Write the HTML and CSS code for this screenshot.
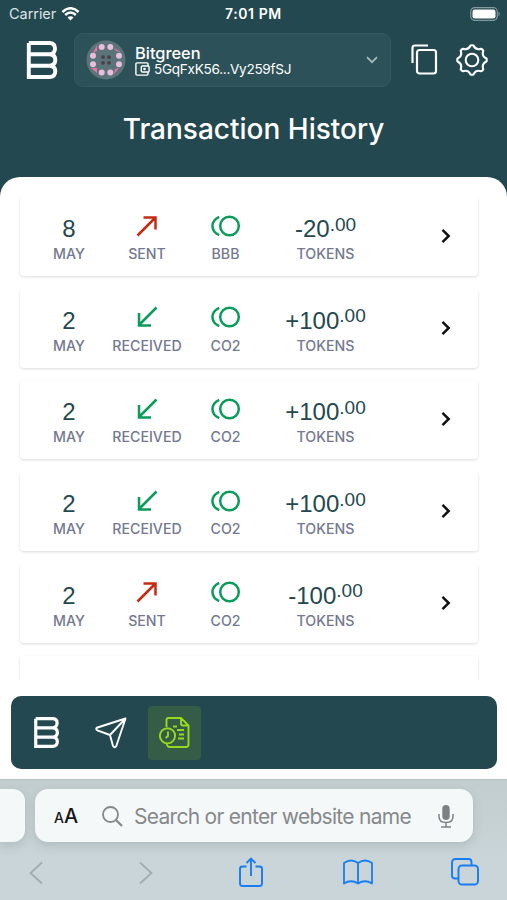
FILE: index.html
```html
<!DOCTYPE html>
<html lang="en">
<head>
<meta charset="utf-8">
<meta name="viewport" content="width=device-width">
<title>Transaction History</title>
<link rel="stylesheet" href="styles.css">
</head>
<body>
<svg class="defs" aria-hidden="true">
  <symbol id="logo" viewBox="0 0 32 38"><path d="M2.800 2H24Q29 2.500 29 7.500Q29 12.500 24 13.300H2.800M24 13.300Q29.300 14 29.300 19Q29.300 24 24 24.700H2.800M24 24.700Q29.300 25.500 29.300 30Q29.300 35.500 24 36H2.800V2" fill="none" stroke="currentColor" stroke-width="3.900"/></symbol>
  <symbol id="sent" viewBox="0 0 22 22"><path d="M1.500 20.500 19.500 2.500M7.500 2.500H19.500V14.500" fill="none" stroke="#c52a12" stroke-width="2.500"/></symbol>
  <symbol id="received" viewBox="0 0 22 22"><path d="M20.500 1.500 3 19M3 7V19.500H15" fill="none" stroke="#0b9b5b" stroke-width="2.500"/></symbol>
  <symbol id="token" viewBox="0 0 30 22"><g fill="none" stroke="#0b9b5b" stroke-width="2.500"><circle cx="18.500" cy="11" r="9.300"/><path d="M8.200 1.800C-.8 6-.8 16 8.200 20.200"/></g></symbol>
  <symbol id="chevron" viewBox="0 0 10 16"><path d="M1.500 1.800 7.700 8 1.500 14.200" fill="none" stroke="#111" stroke-width="2.500"/></symbol>
</svg>

<header class="top">
  <div class="status">
    <span class="carrier">Carrier</span>
    <svg class="wifi" viewBox="0 0 18 14" fill="none" stroke="#fff" stroke-width="2.500"><path d="M.9 5Q9-2.500 17.100 5M3.700 8Q9 3 14.300 8"/><path d="M9 13.500 6 10.500Q9 8 12 10.500Z" fill="#fff" stroke="none"/></svg>
    <span class="time">7:01 PM</span>
    <svg class="battery" viewBox="0 0 31 14"><rect x=".7" y=".7" width="26.600" height="12.600" rx="4" fill="none" stroke="#839b9f" stroke-width="1.200"/><rect x="2.500" y="2.500" width="23" height="9" rx="2.300" fill="#fff"/><path d="M28.600 4.500Q31 7 28.600 9.500Z" fill="#839b9f"/></svg>
  </div>
  <div class="account-bar">
    <svg class="brand"><use href="#logo"/></svg>
    <div class="account">
      <svg class="avatar" viewBox="0 0 40 40">
        <circle cx="20" cy="20" r="19.500" fill="#5a7479"/>
        <path d="M7 13 11 5V11ZM28 8 35 12 30 11ZM5 28 11 28 11 33ZM28 34 29 29 33 28Z" fill="#ed72a3"/>
        <g fill="#e9bddd"><circle cx="15.700" cy="7" r="3"/><circle cx="24.300" cy="7" r="3"/><circle cx="7" cy="15.700" r="3"/><circle cx="33" cy="15.700" r="3"/><circle cx="7" cy="24.300" r="3"/><circle cx="33" cy="24.300" r="3"/><circle cx="15.700" cy="32.500" r="3"/><circle cx="24.300" cy="32.500" r="3"/></g>
        <g fill="#503f4a"><circle cx="17" cy="17.200" r="1.900"/><circle cx="23" cy="17.200" r="1.900"/><circle cx="17" cy="22.800" r="1.900"/><circle cx="23" cy="22.800" r="1.900"/></g>
      </svg>
      <div class="identity">
        <div class="name">Bitgreen</div>
        <div class="address">
          <svg class="wallet" viewBox="0 0 15 14" fill="none" stroke="#fff" stroke-width="1.400"><path d="M13 4V1.800Q13 .9 12 .9H2Q.9 .9 .9 2V12Q.9 13.100 2 13.100H12Q13 13.100 13 12V10"/><rect x="6.300" y="4" width="7.800" height="6" rx="1"/><circle cx="9.500" cy="7" r=".6"/></svg>
          <span>5GqFxK56...Vy259fSJ</span>
        </div>
      </div>
      <svg class="down" viewBox="0 0 12 8"><path d="M1 1.200 6 6.200 11 1.200" fill="none" stroke="#aab9bb" stroke-width="1.700"/></svg>
    </div>
    <svg class="copy" viewBox="0 0 27 31" fill="none" stroke="#fff" stroke-width="2.200"><rect x="6" y="6" width="19" height="23.500" rx="2.500"/><path d="M1.500 19V4Q1.500 1.500 4 1.500H17"/></svg>
    <svg class="gear" viewBox="-16 -16 32 32" fill="none" stroke="#fff" stroke-width="2.100" stroke-linejoin="round"><path d="M14.500-1.500Q15 0 14.500 1.500C10.800 3.200 9.900 5.400 11.300 9.200Q10.600 10.600 9.200 11.300C5.400 9.900 3.200 10.800 1.500 14.500Q0 15 -1.500 14.500C-3.200 10.800-5.400 9.900-9.200 11.300Q-10.600 10.600-11.300 9.200C-9.900 5.400-10.800 3.200-14.500 1.500Q-15 0-14.500-1.500C-10.800-3.200-9.900-5.400-11.300-9.200Q-10.600-10.600-9.200-11.300C-5.400-9.900-3.200-10.800-1.500-14.500Q0-15 1.500-14.500C3.200-10.800 5.400-9.900 9.200-11.300Q10.600-10.600 11.300-9.200C9.900-5.400 10.800-3.200 14.500-1.500Z"/><circle r="6.300"/></svg>
  </div>
  <h1>Transaction History</h1>
</header>

<main class="sheet">
  <div class="list">
    <article class="card">
      <div class="cell"><div class="value">8</div><div class="label">MAY</div></div>
      <div class="cell"><div class="value"><svg class="arrow"><use href="#sent"/></svg></div><div class="label">SENT</div></div>
      <div class="cell"><div class="value"><svg class="token"><use href="#token"/></svg></div><div class="label">BBB</div></div>
      <div class="cell"><div class="value">-20<span class="cents">.00</span></div><div class="label">TOKENS</div></div>
      <svg class="go"><use href="#chevron"/></svg>
    </article>
    <article class="card">
      <div class="cell"><div class="value">2</div><div class="label">MAY</div></div>
      <div class="cell"><div class="value"><svg class="arrow"><use href="#received"/></svg></div><div class="label">RECEIVED</div></div>
      <div class="cell"><div class="value"><svg class="token"><use href="#token"/></svg></div><div class="label">CO2</div></div>
      <div class="cell"><div class="value">+100<span class="cents">.00</span></div><div class="label">TOKENS</div></div>
      <svg class="go"><use href="#chevron"/></svg>
    </article>
    <article class="card">
      <div class="cell"><div class="value">2</div><div class="label">MAY</div></div>
      <div class="cell"><div class="value"><svg class="arrow"><use href="#received"/></svg></div><div class="label">RECEIVED</div></div>
      <div class="cell"><div class="value"><svg class="token"><use href="#token"/></svg></div><div class="label">CO2</div></div>
      <div class="cell"><div class="value">+100<span class="cents">.00</span></div><div class="label">TOKENS</div></div>
      <svg class="go"><use href="#chevron"/></svg>
    </article>
    <article class="card">
      <div class="cell"><div class="value">2</div><div class="label">MAY</div></div>
      <div class="cell"><div class="value"><svg class="arrow"><use href="#received"/></svg></div><div class="label">RECEIVED</div></div>
      <div class="cell"><div class="value"><svg class="token"><use href="#token"/></svg></div><div class="label">CO2</div></div>
      <div class="cell"><div class="value">+100<span class="cents">.00</span></div><div class="label">TOKENS</div></div>
      <svg class="go"><use href="#chevron"/></svg>
    </article>
    <article class="card">
      <div class="cell"><div class="value">2</div><div class="label">MAY</div></div>
      <div class="cell"><div class="value"><svg class="arrow"><use href="#sent"/></svg></div><div class="label">SENT</div></div>
      <div class="cell"><div class="value"><svg class="token"><use href="#token"/></svg></div><div class="label">CO2</div></div>
      <div class="cell"><div class="value">-100<span class="cents">.00</span></div><div class="label">TOKENS</div></div>
      <svg class="go"><use href="#chevron"/></svg>
    </article>
    <article class="card"></article>
  </div>
  <nav class="tabs">
    <div class="tab"><svg class="tab-logo"><use href="#logo"/></svg></div>
    <div class="tab"><svg class="plane" viewBox="0 0 32 32" fill="none" stroke="#fff" stroke-width="1.900" stroke-linejoin="round"><path d="M30.500 1.500 2.500 10.500Q0 11.500 2.300 13.300L15 18 18 29Q19.800 31.500 21.300 29ZM15 18 30.500 1.500"/></svg></div>
    <div class="tab active"><svg class="history" viewBox="0 0 31 31" fill="none" stroke="#96d91e" stroke-width="1.900" stroke-linejoin="round"><path d="M7.500 10V3Q7.500 1 9.500 1H22L29.500 8.500V27.500Q29.500 30 27 30H10.500Q8.500 30 7.700 27M22 1V6.500Q22 8.500 24 8.500H29.500M14 9.500H18M18 13H25M20 17.500H25M19 21.500H25"/><circle cx="8.500" cy="18.800" r="7.600"/><path d="M9 14.500V19L6.500 21"/></svg></div>
  </nav>
</main>

<footer class="browser">
  <div class="address-row">
    <div class="prev-page"></div>
    <div class="search">
      <span class="reader"><small>A</small>A</span>
      <svg class="lens" viewBox="0 0 21 21" fill="none" stroke="#858889" stroke-width="1.800"><circle cx="8.500" cy="8.500" r="7.500"/><path d="M14 14 20 20" stroke-width="2.300"/></svg>
      <span class="hint">Search or enter website name</span>
      <svg class="mic" viewBox="0 0 16 23"><rect x="4.300" y="0" width="7.400" height="15" rx="3.700" fill="#7d8082"/><path d="M1 9V11.500Q1 17.500 8 17.500T15 11.500V9M8 17.500V22M3 22H13" fill="none" stroke="#7d8082" stroke-width="1.500"/></svg>
    </div>
  </div>
  <div class="tools">
    <svg viewBox="0 0 32 32" fill="none" stroke="#a3abae" stroke-width="1.800"><path d="M22 5.500 10.500 16 22 26.500"/></svg>
    <svg viewBox="0 0 32 32" fill="none" stroke="#a3abae" stroke-width="1.800"><path d="M13 5.500 24.500 16 13 26.500"/></svg>
    <svg viewBox="0 0 32 32" fill="none" stroke="#187df0" stroke-width="1.900"><path d="M11.500 9.500H7.500Q5 9.500 5 12V26.500Q5 29 7.500 29H24.500Q27 29 27 26.500V12Q27 9.500 24.500 9.500H20.500M16 19V1.500M11.500 6 16 1.500 20.500 6"/></svg>
    <svg viewBox="0 0 32 32" fill="none" stroke="#187df0" stroke-width="1.800" stroke-linejoin="round"><path d="M16 6Q9 1 2 6V26.500Q9 22 16 26.500Q23 22 30 26.500V6Q23 1 16 6V26.500"/></svg>
    <svg viewBox="0 0 32 32" fill="none" stroke="#187df0" stroke-width="1.900"><rect x="9.500" y="8.500" width="19.500" height="19" rx="3.500"/><path d="M9.500 21.500H6Q3 21.500 3 18.500V5.500Q3 2 6.500 2H19.500Q22.500 2 22.500 5V8.500"/></svg>
  </div>
</footer>
</body>
</html>
```
FILE: styles.css
```css
* { box-sizing: border-box; }
body {
  margin: 0;
  width: 507px;
  height: 900px;
  overflow: hidden;
  background: #244850;
  color: #fff;
  font-family: Inter, "Liberation Sans", sans-serif;
}
svg { display: block; flex: none; }
.defs { display: none; }

.top { height: 177px; }
.status {
  display: grid;
  grid-template-columns: 52px 173px 1fr 31px;
  align-items: center;
  height: 27px;
  padding: 0 6px 0 9px;
}
.carrier { font-size: 14.5px; letter-spacing: -.05px; color: #dce4e6; white-space: nowrap; }
.wifi { width: 19px; height: 14px; }
.time { font-size: 14px; font-weight: 600; letter-spacing: .6px; margin-left: -9px; }
.battery { width: 31px; height: 14px; }

.account-bar { display: flex; align-items: center; height: 65px; padding-left: 26px; }
.brand { width: 32px; height: 38px; margin-right: 16px; }
.account {
  display: flex;
  align-items: center;
  width: 317px;
  height: 54px;
  padding: 0 12px 0 11px;
  border: 1px solid #37575e;
  border-radius: 9px;
  background: #2c5158;
}
.avatar { width: 40px; height: 40px; }
.identity { margin-left: 9px; flex: 1; }
.name { font-size: 16.4px; line-height: 19px; font-weight: 500; }
.address { display: flex; align-items: center; gap: 4px; height: 12px; font-size: 13.6px; letter-spacing: -.3px; white-space: nowrap; }
.wallet { width: 15px; height: 14px; }
.down { width: 12px; height: 8px; }
.copy { width: 27px; height: 31px; margin-left: 20px; }
.gear { width: 32px; height: 32px; margin-left: 18px; }
h1 {
  margin: 18px 0 0;
  font-size: 28px;
  font-weight: 500;
  line-height: 38px;
  text-align: center;
}

.sheet {
  height: 602px;
  padding: 20px 10px 0 11px;
  border-radius: 20px 20px 0 0;
  background: #fff;
}
.list {
  display: flex;
  flex-direction: column;
  gap: 12.7px;
  height: 483px;
  margin-bottom: 16px;
  padding: 0 19px 0 9px;
  overflow: hidden;
}
.card {
  display: grid;
  grid-template-columns: 78px 78px 79px 121px 1fr;
  flex: none;
  height: 79px;
  padding-left: 10px;
  border-radius: 4px;
  background: #fff;
  box-shadow: 0 1px 3px rgba(0, 0, 0, .14);
  clip-path: inset(0 -4px -5px -4px);
}
.cell { padding-top: 17px; text-align: center; white-space: nowrap; }
.value {
  display: flex;
  align-items: center;
  justify-content: center;
  height: 30px;
  color: #244850;
  font-family: "Liberation Sans", sans-serif;
  font-size: 24px;
}
.cents { font-size: 19px; margin-top: -9px; }
.arrow { width: 22px; height: 22px; margin-top: -7px; }
.token { width: 30px; height: 22px; margin-top: -7px; }
.label { color: #747990; font-size: 14.2px; font-weight: 500; line-height: 20px; }
.go { width: 10px; height: 16px; margin: 31px 0 0 55px; }

.tabs {
  display: flex;
  align-items: center;
  gap: 11px;
  height: 73px;
  padding-left: 9px;
  border-radius: 10px;
  background: #244850;
}
.tab { display: flex; align-items: center; justify-content: center; width: 53px; height: 54px; border-radius: 4px; }
.tab.active { background: #345c47; }
.tab-logo { width: 27px; height: 31px; }
.plane { width: 32px; height: 32px; }
.history { width: 31px; height: 31px; }

.browser {
  height: 121px;
  padding-top: 9px;
  border-top: 1px solid #b5bfc1;
  background: linear-gradient(#c1cdce, #cad5d9 70%);
}
.address-row { display: flex; gap: 10px; height: 53px; }
.prev-page, .search { background: #f5f8f8; box-shadow: 0 4px 10px rgba(65, 85, 90, .17); }
.prev-page { width: 25px; border-radius: 0 12px 12px 0; }
.search { display: flex; align-items: center; width: 438px; padding: 2px 19px 0; border-radius: 13px; }
.reader { width: 48px; color: #151718; font-size: 20px; font-weight: 500; line-height: 51px; }
.reader small { font-size: 14px; }
.lens { width: 21px; height: 21px; }
.hint { flex: 1; margin-left: 11px; color: #86898b; font-size: 21px; letter-spacing: -.72px; white-space: nowrap; }
.mic { width: 16px; height: 23px; }
.tools {
  display: flex;
  justify-content: space-between;
  padding: 15px 26px 0 20px;
}
.tools svg { width: 32px; height: 32px; }
```
